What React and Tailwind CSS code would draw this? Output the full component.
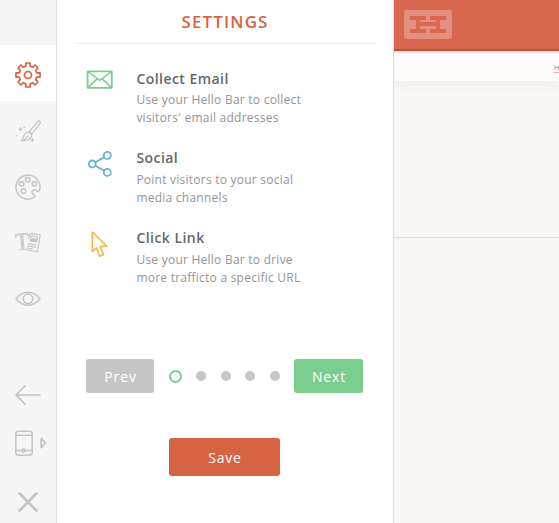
import React from "react";

const point = (radius, degrees) => {
  const a = (degrees * Math.PI) / 180;
  return `${(14 + radius * Math.sin(a)).toFixed(2)} ${(14 - radius * Math.cos(a)).toFixed(2)}`;
};

// Outline of a gear with eight teeth, centred in a 28 unit box.
const gearPath =
  [0, 45, 90, 135, 180, 225, 270, 315]
    .map((d, i) => {
      const start = `${i === 0 ? "M" : "A 8.8 8.8 0 0 1"} ${point(9, d - 14)}`;
      return `${start} L ${point(12.2, d - 10)} L ${point(12.2, d + 10)} L ${point(9, d + 14)}`;
    })
    .join(" ") + " Z";

function Icon({ className = "", children, stroke = 1.5 }) {
  return (
    <svg
      viewBox="0 0 28 28"
      className={`size-7 shrink-0 ${className}`}
      fill="none"
      stroke="currentColor"
      strokeWidth={stroke}
      strokeLinecap="round"
      strokeLinejoin="round"
    >
      {children}
    </svg>
  );
}

const GearIcon = () => (
  <Icon stroke={1.7}>
    <path d={gearPath} />
    <circle cx="14" cy="14" r="3.5" />
  </Icon>
);

const BrushIcon = () => (
  <Icon stroke={1.2}>
    <path d="M15 14.8 23.8 4.6C25 3.2 27.4 4.8 26 6.6L17.8 17z" />
    <path d="M14.4 15 17.7 17.5C17.8 21.6 13.6 24.2 7.4 23.6 10.8 21.6 8.4 15.6 14.4 15z" />
    <path d="M10.6 22.6 14 18.8" />
    <path d="M6.5 10.6v3.2M4.9 12.2h3.2M18.3 21.6v3.2M16.7 23.2h3.2" />
    <path d="M2.4 18.4h.2M10.2 10.4h.2" strokeWidth="1.5" />
  </Icon>
);

const PaletteIcon = () => (
  <Icon>
    <path d="M25.9 15.6A12 12 0 1 0 20.5 24.2C21.3 23.6 21.1 22.9 20 22.2 16.8 20.3 17.8 16.5 20.7 16.7 22.8 16.8 22 18.9 24.2 18.4 25.4 18 25.8 17 25.9 15.6Z" />
    <circle cx="13.7" cy="6.8" r="2.3" />
    <circle cx="7.6" cy="10.8" r="2.3" />
    <circle cx="20.4" cy="10.8" r="2.3" />
    <circle cx="9.4" cy="18" r="2.3" />
  </Icon>
);

const ContentIcon = () => (
  <Icon stroke={1.1}>
    <path d="M1.7 8.4 1.5 5.4 13.6 4.2 13.8 7M2 7.5C2.3 6.3 3 6 6.5 5.6L8 19.8M13.6 6.3C12.8 5.3 12 5.2 8.7 5.4L10 19.6M5.4 20.8 12.8 20.1" strokeWidth="0.9" />
    <path d="M7.7 6 9 20" strokeWidth="1.1" />
    <path d="M17.6 4.4 26.3 6 23.4 22.8 12.6 21M17.6 4.4 15.6 4.8 14.7 9.2" />
    <path d="M16.2 11.9 17.3 6.5 23.7 7.7 22.8 13z" />
    <path d="m17 11.2 2.2-2 1.2 1.3 1.5-.8.5.7-.4 1.8-4.8-.7z" fill="currentColor" />
    <path d="m14.2 14.6 8 1.4M13.7 16.8l8 1.4M13.3 19l5 .9" />
  </Icon>
);

const EyeIcon = () => (
  <Icon>
    <path d="M2 13.8C8.5 5 19.5 5 26 13.8 19.5 22.3 8.5 22.3 2 13.8Z" />
    <circle cx="14" cy="13.8" r="4.7" />
  </Icon>
);

const EmailIcon = () => (
  <Icon className="text-[#7acd8c]" stroke={1.8}>
    <rect x="1.6" y="5.3" width="24.2" height="16.6" rx=".4" />
    <path d="m2.3 6 11.4 8.4L25.1 6M2.5 21.1l8.3-8M24.9 21.1l-8.3-8" strokeWidth="1.5" />
  </Icon>
);

const ShareIcon = () => (
  <Icon className="text-[#67b5d3]" stroke={1.8}>
    <circle cx="6.2" cy="14" r="3.5" />
    <circle cx="21.3" cy="5.4" r="3.5" />
    <circle cx="21.3" cy="22.4" r="3.5" />
    <path d="m9.4 12.2 8.9-5.1M9.4 15.7l8.9 5" />
  </Icon>
);

const CursorIcon = () => (
  <Icon className="text-[#f4b94a]" stroke={1.7}>
    <path d="M6.4 2v19.4l4.2-3.6 3.1 8.3 3.7-1.5-3.2-7.9 6.5-.5z" />
  </Icon>
);

const tabs = [BrushIcon, PaletteIcon, ContentIcon, EyeIcon];

const goals = [
  { icon: EmailIcon, title: "Collect Email", lines: ["Use your Hello Bar to collect", "visitors' email addresses"], row: "h-[79px]", iconTop: "-mt-[3px]", textTop: "pt-[2px]" },
  { icon: ShareIcon, title: "Social", lines: ["Point visitors to your social", "media channels"], row: "h-[80px]", iconTop: "mt-[2px]", textTop: "pt-[3px]" },
  { icon: CursorIcon, title: "Click Link", lines: ["Use your Hello Bar to drive", "more trafficto a specific URL"], row: "h-[64px]", iconTop: "mt-[2px]", textTop: "pt-[3px]" },
];

function Sidebar() {
  return (
    <nav className="flex w-[57px] shrink-0 flex-col border-r border-[#dedede] bg-[#f5f5f5] pt-[45px] text-[#c5c5c5]">
      <button className="flex h-14 w-full shrink-0 items-center justify-center bg-white pt-[3px] text-[#d86342]">
        <GearIcon />
      </button>
      {tabs.map((Tab, i) => (
        <button key={i} className="flex h-14 shrink-0 items-center justify-center pt-1">
          <Tab />
        </button>
      ))}
      <div className="mt-[56px] flex flex-col pl-[14px]">
        <Icon stroke={1.7}>
          <path d="M26 14H2M11 4.8 2 14l9 9.2" />
        </Icon>
        <div className="mt-[20px] flex items-center">
          <Icon stroke={1.6}>
            <rect x="1.8" y="2.2" width="16.4" height="24" rx="2.6" />
            <path d="M2 6.2h16M2 21.5h5.8M11.8 21.5H18" />
            <circle cx="9.8" cy="21.5" r="1.4" />
          </Icon>
          <svg viewBox="0 0 8 12" className="-ml-[2px] h-3 w-2" fill="none" stroke="currentColor" strokeWidth="1.8" strokeLinejoin="round">
            <path d="M1.2 1.4v9.2L5.6 6z" />
          </svg>
        </div>
        <Icon className="mt-[31px]" stroke={2.8}>
          <path d="m5.6 5.6 16.8 16.8M22.4 5.6 5.6 22.4" />
        </Icon>
      </div>
    </nav>
  );
}

function SettingsPanel() {
  return (
    <main className="w-[337px] shrink-0 border-r border-[#dedede] bg-white">
      <h1 className="mx-[17px] h-11 border-b border-[#f0f0f0] pt-[10px] text-center text-[17px] leading-[24px] font-semibold tracking-[1.1px] text-[#d86342]">
        SETTINGS
      </h1>
      <ul className="flex flex-col pt-[25px] pl-[29px]">
        {goals.map(({ icon: GoalIcon, title, lines, row, iconTop, textTop }) => (
          <li key={title} className={`flex ${row}`}>
            <div className={iconTop}>
              <GoalIcon />
            </div>
            <div className="pl-[22.4px] whitespace-nowrap">
              <h2 className="text-[14px] leading-5 font-semibold tracking-[0.45px] text-[#666]">{title}</h2>
              <p className={`text-[12px] leading-[18px] tracking-[0.24px] text-[#939393] ${textTop}`}>
                {lines[0]}
                <br />
                {lines[1]}
              </p>
            </div>
          </li>
        ))}
      </ul>
      <div className="mt-[67px] flex items-center pl-[29px] text-[14px] tracking-[0.9px] text-white">
        <button className="h-[34px] w-[68px] rounded-[3px] bg-[#c6c6c6] pt-px pl-px">Prev</button>
        <span className="ml-[15px] size-[13px] rounded-full border-2 border-[#7acd8c]" />
        <div className="ml-[14px] flex gap-[14.7px]">
          {[2, 3, 4, 5].map((step) => (
            <span key={step} className="size-[10px] rounded-full bg-[#c6c6c6]" />
          ))}
        </div>
        <button className="ml-[14px] h-[34px] w-[69px] rounded-[3px] bg-[#7acd8c] pt-px pl-px">Next</button>
      </div>
      <button className="mt-[45px] ml-[112px] h-[38px] w-[111px] rounded-[3px] bg-[#d86342] pt-px pl-px text-[14px] tracking-[0.8px] text-white">
        Save
      </button>
    </main>
  );
}

function Preview() {
  return (
    <section className="min-w-0 flex-1 overflow-hidden bg-[#faf6f3]">
      <header className="h-[51px] border-b-2 border-[#b55440] bg-[#d9674f] pt-[10px] pl-[10px]">
        <div className="flex h-[29px] w-12 items-center justify-center rounded-[2px] bg-[#e38e7e]">
          <svg viewBox="0 0 36 17" className="h-[17px] w-9" fill="#d9674f">
            <path d="M0 0h16v4h-6v2h16v-2h-6V0h16v4h-6v9h6v4H20v-4h6v-3H10v3h6v4H0v-4h6V4H0z" />
          </svg>
        </div>
      </header>
      <div className="flex h-[30px] justify-end border-t-2 border-[#e2e0de] bg-[#fdfcfa] pt-[10px] shadow-[0_3px_12px_rgba(120,90,100,0.07)]">
        <span className="flex h-[10px] w-[5px] border-b border-[#f1b3a3] font-['Liberation_Sans',sans-serif] text-[7px] leading-[9px] text-[#8a8a8a]">H</span>
      </div>
      <div className="mt-[156px] border-t border-[#dfdddb]" />
    </section>
  );
}

export default function App() {
  return (
    <div className="flex h-[523px] w-[559px] overflow-hidden bg-white font-['Open_Sans',sans-serif]">
      <Sidebar />
      <SettingsPanel />
      <Preview />
    </div>
  );
}
